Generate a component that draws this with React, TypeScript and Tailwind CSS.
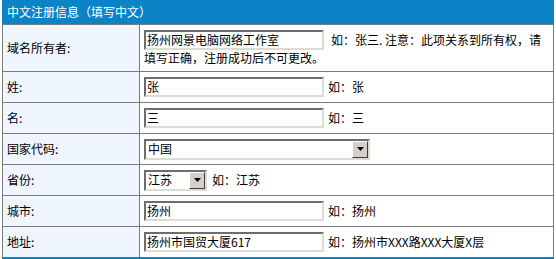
import React from 'react';

const font = { fontFamily: '"Noto Sans CJK SC", "Liberation Sans", sans-serif' };

const rows = [
  { label: '姓:', value: '张', hint: '如：张' },
  { label: '名:', value: '三', hint: '如：三' },
];

function TextBox({ value, width = 'w-[180px]' }: { value: string; width?: string }) {
  return (
    <span
      className={`inline-flex h-[20px] ${width} items-center border-2 border-t-[#6d6d6d] border-l-[#6d6d6d] border-b-[#dcdcd4] border-r-[#dcdcd4] bg-white pl-[1px] align-middle text-[12px] leading-none text-black`}
    >
      {value}
    </span>
  );
}

function Dropdown({ value, width }: { value: string; width: string }) {
  return (
    <span
      className={`inline-flex h-[21px] ${width} items-center justify-between border-2 border-t-[#6d6d6d] border-l-[#6d6d6d] border-b-[#dcdcd4] border-r-[#dcdcd4] bg-white align-middle text-[12px] leading-none text-black`}
    >
      <span className="pl-[2px]">{value}</span>
      <span className="flex h-[17px] w-[16px] items-center justify-center border border-t-white border-l-white border-b-[#404040] border-r-[#404040] bg-[#d4d0c8]">
        <svg width="7" height="4" viewBox="0 0 7 4">
          <path d="M0 0h7L3.5 4z" fill="#000" />
        </svg>
      </span>
    </span>
  );
}

function Row({ label, tall, children }: { label: string; tall?: boolean; children: React.ReactNode }) {
  return (
    <div className={`grid grid-cols-[137px_1fr] border-t border-[#7b7b7b] ${tall ? 'h-[47px]' : 'h-[31px]'}`}>
      <div className="flex items-center border-r border-[#7b7b7b] bg-[#eef5fd] pl-1 text-[12px] text-black">{label}</div>
      <div className="flex items-center bg-white pl-1 text-[12px] text-black">{children}</div>
    </div>
  );
}

export default function App() {
  return (
    <div className="h-[259px] w-[556px] bg-white" style={font}>
      <div className="ml-[2px] w-[552px]">
        <div className="flex h-6 items-center bg-[#0a84c6] pl-[5px] text-[12px] text-white">中文注册信息（填写中文）</div>
        <div className="border-x border-[#7b7b7b]">
          <Row label="域名所有者:" tall>
            <div className="leading-[16px]">
              <TextBox value="扬州网景电脑网络工作室" />
              <span className="ml-[7px] align-middle">如：张三. 注意：此项关系到所有权，请</span>
              <br />
              <span>填写正确，注册成功后不可更改。</span>
            </div>
          </Row>
          {rows.map((r) => (
            <Row key={r.label} label={r.label}>
              <TextBox value={r.value} />
              <span className="ml-1">{r.hint}</span>
            </Row>
          ))}
          <Row label="国家代码:">
            <Dropdown value="中国" width="w-[226px]" />
          </Row>
          <Row label="省份:">
            <Dropdown value="江苏" width="w-[63px]" />
            <span className="ml-[5px]">如：江苏</span>
          </Row>
          <Row label="城市:">
            <TextBox value="扬州" />
            <span className="ml-1">如：扬州</span>
          </Row>
          <Row label="地址:">
            <TextBox value="扬州市国贸大厦617" />
            <span className="ml-1">如：扬州市XXX路XXX大厦X层</span>
          </Row>
        </div>
        <div className="h-[2px] bg-[#0a84c6]" />
      </div>
    </div>
  );
}
